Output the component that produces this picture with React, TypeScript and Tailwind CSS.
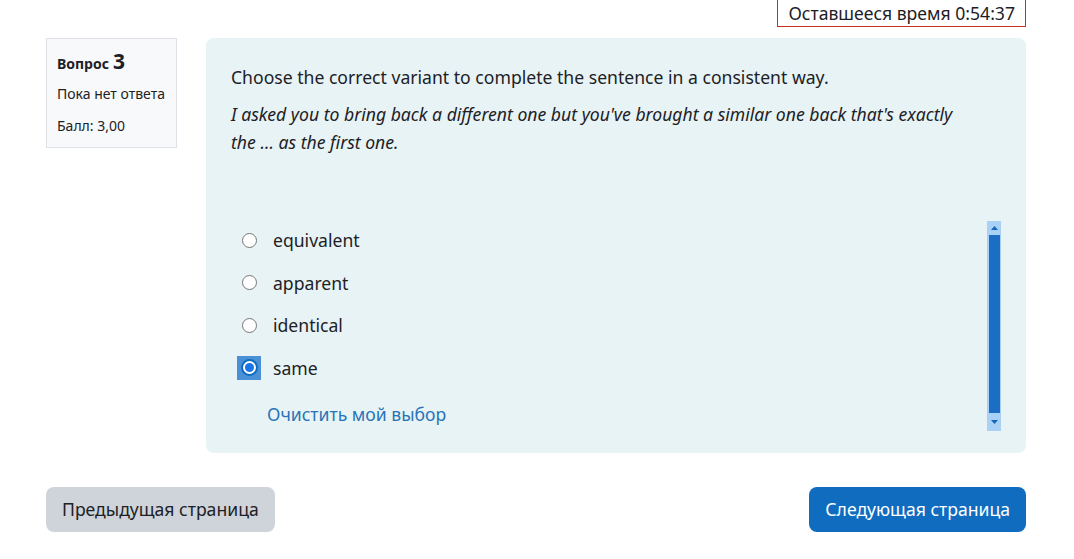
import { useState } from 'react'

const options = ['equivalent', 'apparent', 'identical', 'same']

export default function App() {
  const [selected, setSelected] = useState('same')

  return (
    <div className="w-[1074px] h-[559px] overflow-hidden bg-white text-[#1d2125] font-['Noto_Sans',sans-serif]">
      <div className="flex justify-end pr-[48px]">
        <div className="h-[27px] px-[10px] flex items-center border border-t-0 border-[#ca3120] bg-white text-[17.6px] leading-[24px]">
          Оставшееся время 0:54:37
        </div>
      </div>

      <div className="flex items-start gap-[29px] pl-[46px] mt-[11px]">
        <div className="w-[131px] h-[110px] border border-[#dee2e6] bg-[#f8f9fa] px-[10px] pt-[10px]">
          <h3 className="flex items-baseline gap-[4px] text-[14px] font-bold leading-[24px]">
            Вопрос <span className="text-[21px]">3</span>
          </h3>
          <div className="text-[14px] leading-[20px] mt-[8px]">Пока нет ответа</div>
          <div className="text-[14px] leading-[20px] mt-[12px]">Балл: 3,00</div>
        </div>

        <div className="w-[820px] h-[415px] rounded-[8px] bg-[#e7f3f5] pl-[25px] pr-[25px] pt-[25px] flex flex-col">
          <p className="text-[17.6px] leading-[28px]">
            Choose the correct variant to complete the sentence in a consistent way.
          </p>
          <p className="w-[750px] text-[17.6px] leading-[28px] italic mt-[9px]">
            I asked you to bring back a different one but you've brought a similar one back that's exactly the ... as the first one.
          </p>

          <div className="flex mt-[65px] h-[210px]">
            <div className="flex-1 -mt-[2px]">
              {options.map((opt) => {
                const isSelected = selected === opt
                return (
                  <label
                    key={opt}
                    onClick={() => setSelected(opt)}
                    className="flex items-center h-[42.5px] cursor-pointer"
                  >
                    <span className="w-[36px] flex justify-center">
                      {isSelected ? (
                        <span className="w-[24px] h-[24px] bg-[#4a90d6] flex items-center justify-center">
                          <span className="w-[17px] h-[17px] rounded-full bg-white border-2 border-[#0f6cbf] flex items-center justify-center">
                            <span className="w-[9px] h-[9px] rounded-full bg-[#1a73e8]" />
                          </span>
                        </span>
                      ) : (
                        <span className="w-[15px] h-[15px] rounded-full border border-[#767676] bg-white" />
                      )}
                    </span>
                    <span className="text-[17.6px] leading-[26px] ml-[6px]">{opt}</span>
                  </label>
                )
              })}
              <button
                onClick={() => setSelected('')}
                className="ml-[36px] mt-[12px] text-[17.6px] leading-[26px] text-[#2a73b8]"
              >
                Очистить мой выбор
              </button>
            </div>

            <div className="w-[14px] h-full bg-[#a8d1f5] flex flex-col items-center">
              <div className="h-[14px] flex items-center justify-center">
                <svg width="7" height="4" viewBox="0 0 7 4">
                  <path d="M0 4 L3.5 0 L7 4 Z" fill="#1565b8" />
                </svg>
              </div>
              <div className="w-[11px] flex-1 bg-[#1a6fc4]" />
              <div className="h-[18px] flex items-center justify-center">
                <svg width="7" height="4" viewBox="0 0 7 4">
                  <path d="M0 0 L3.5 4 L7 0 Z" fill="#1565b8" />
                </svg>
              </div>
            </div>
          </div>
        </div>
      </div>

      <div className="flex justify-between pl-[46px] pr-[48px] mt-[34px]">
        <button className="h-[45px] px-[16px] rounded-[8px] bg-[#ced4da] text-[17.6px] text-[#1d2125]">
          Предыдущая страница
        </button>
        <button className="h-[45px] px-[16px] rounded-[8px] bg-[#0f6cbf] text-[17.6px] text-white">
          Следующая страница
        </button>
      </div>
    </div>
  )
}
